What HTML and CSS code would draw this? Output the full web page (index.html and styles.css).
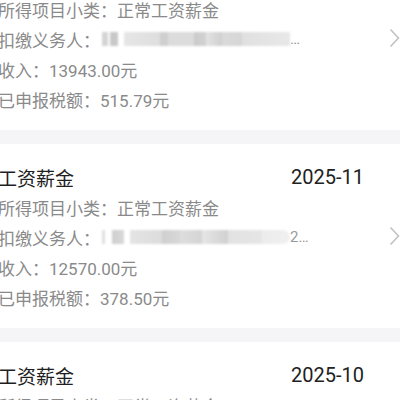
FILE: index.html
```html
<!DOCTYPE html>
<html lang="zh-CN">
<head>
<meta charset="utf-8">
<link rel="stylesheet" href="styles.css">
</head>
<body>
<div class="list">
  <div class="card">
    <div class="head"><span class="title">工资薪金</span><span class="date">2025-12</span></div>
    <div class="line">所得项目小类：正常工资薪金</div>
    <div class="line">扣缴义务人：<span class="blur b1"></span><span class="dots">…</span></div>
    <div class="line">收入：13943.00元</div>
    <div class="line">已申报税额：515.79元</div>
    <svg class="chev" viewBox="0 0 11 20" width="11" height="20"><path d="M1.5 1.5 L9.5 10 L1.5 18.5" fill="none" stroke="#c2c2c2" stroke-width="1.6"/></svg>
  </div>
  <div class="card">
    <div class="head"><span class="title">工资薪金</span><span class="date">2025-11</span></div>
    <div class="line">所得项目小类：正常工资薪金</div>
    <div class="line">扣缴义务人：<span class="blur b2"></span><span class="dots">2…</span></div>
    <div class="line">收入：12570.00元</div>
    <div class="line">已申报税额：378.50元</div>
    <svg class="chev" viewBox="0 0 11 20" width="11" height="20"><path d="M1.5 1.5 L9.5 10 L1.5 18.5" fill="none" stroke="#c2c2c2" stroke-width="1.6"/></svg>
  </div>
  <div class="card">
    <div class="head"><span class="title">工资薪金</span><span class="date">2025-10</span></div>
    <div class="line">所得项目小类：正常工资薪金</div>
    <div class="line">扣缴义务人：<span class="blur b1"></span><span class="dots">…</span></div>
  </div>
</div>
</body>
</html>
```

FILE: styles.css
```css
html, body {
  margin: 0;
  padding: 0;
  background: #ffffff;
  overflow: hidden;
}
body {
  font-family: Roboto, "Noto Sans CJK SC", sans-serif;
  width: 400px;
  height: 400px;
}
.list {
  margin-top: -54px;
  margin-left: -2px;
}
.card {
  position: relative;
  background: #ffffff;
  padding: 18px 36px 16px 0;
}
.card + .card {
  border-top: 14px solid #f5f5f7;
}
.head {
  display: flex;
  justify-content: space-between;
  align-items: center;
  height: 30px;
}
.title {
  font-size: 19px;
  color: #1f1f1f;
}
.date {
  font-size: 20px;
  color: #222222;
}
.line {
  display: flex;
  align-items: center;
  height: 30px;
  font-size: 17px;
  color: #8a8a8a;
  white-space: nowrap;
}
.blur {
  display: inline-block;
  width: 188px;
  height: 14px;
  margin-left: 2px;
  filter: blur(1.2px);
}
.b1 {
  background: linear-gradient(90deg,
    #d4d4d4 0, #d4d4d4 6px, #ffffff 6px, #ffffff 8px,
    #c8c8c8 8px, #c8c8c8 16px, #ffffff 16px, #ffffff 22px,
    #e6e6e6 22px, #dedede 58px, #cfcfcf 58px, #cfcfcf 66px,
    #dcdcdc 66px, #dcdcdc 92px, #cbcbcb 92px, #d2d2d2 104px,
    #e3e3e3 104px, #cfcfcf 120px, #dadada 120px, #d6d6d6 140px,
    #e0e0e0 140px, #e8e8e8 188px);
}
.b2 {
  background: linear-gradient(90deg,
    #e0e0e0 0, #e0e0e0 3px, #ffffff 3px, #ffffff 10px,
    #cfcfcf 10px, #d8d8d8 22px, #ffffff 22px, #ffffff 28px,
    #e4e4e4 28px, #dcdcdc 60px, #cfcfcf 60px, #d8d8d8 78px,
    #dedede 78px, #d4d4d4 100px, #e6e6e6 100px, #d0d0d0 126px,
    #e2e2e2 126px, #e6e6e6 160px, #ececec 160px, #f0f0f0 188px);
  border-radius: 0 7px 7px 0;
}
.dots {
  color: #9a9a9a;
  font-size: 15px;
  margin-left: 0;
}
.chev {
  position: absolute;
  right: 0;
  top: 50%;
  transform: translateY(-50%);
}
```
